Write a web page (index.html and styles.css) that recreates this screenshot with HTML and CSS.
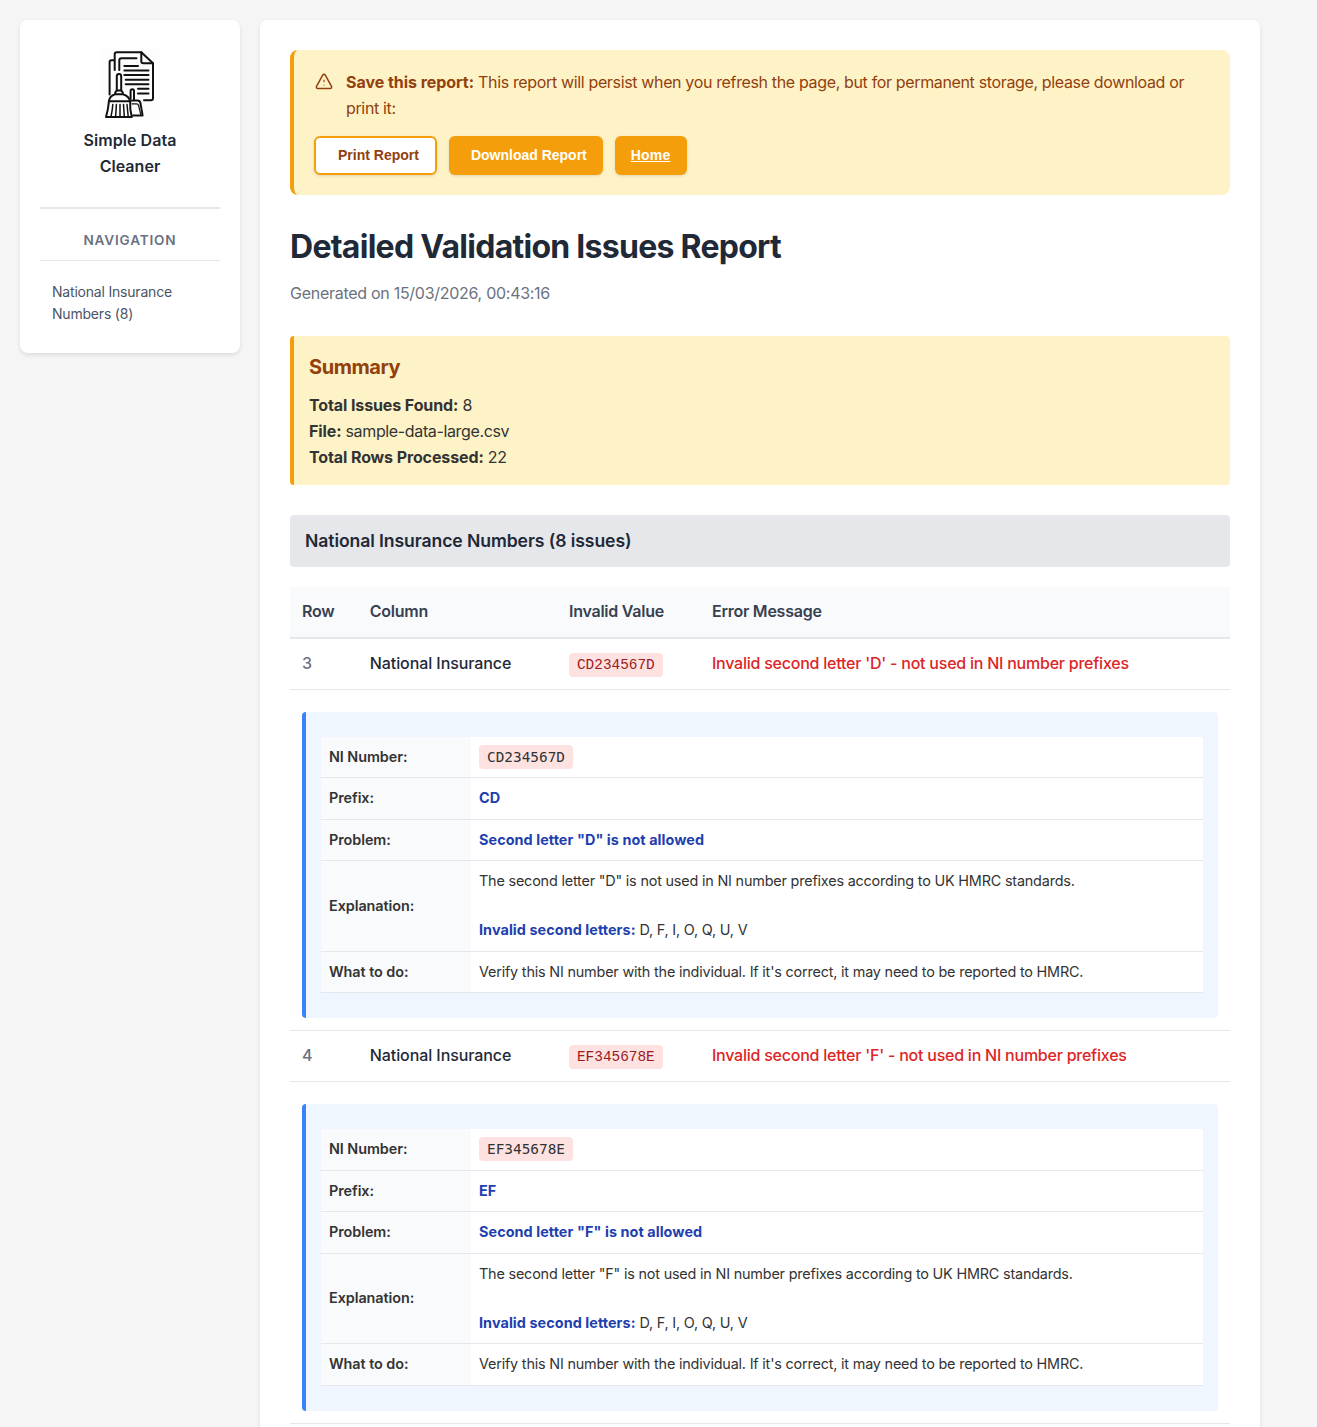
FILE: index.html
```html
<!DOCTYPE html>
<html lang="en">
<head>
<meta charset="utf-8">
<title>Detailed Validation Issues Report</title>
<link rel="stylesheet" href="styles.css">
</head>
<body>
<div class="layout">
  <aside class="sidebar">
    <div class="brand">
      <svg class="logo" viewBox="0 0 60 72" width="60" height="72" fill="none" stroke="#111" stroke-width="2" stroke-linecap="round" stroke-linejoin="round" aria-hidden="true">
        <path d="M14.7 22V6.5Q14.7 4.2 16.7 4.2H41.3L53 15.3V50.3Q53 52.3 51 52.3H44"/>
        <path d="M41.3 4.2V13.3Q41.3 15.3 43.3 15.3H53"/>
        <path d="M19.3 22V12.3Q19.3 10.2 21.4 10.2H36.5"/>
        <path d="M14 12.3H11.5Q9.6 12.3 9.6 14.2V46.5"/>
        <path d="M24.3 18.1H38M24.3 22.5H48.5M24.3 27.1H48.5M25.7 31.7H48.5M25.7 36.3H48.5M38 40.8H48.5M38 45.4H48.5"/>
        <path d="M16.8 42.5V28.2Q16.8 26 19 26T21.2 28.2V42.5"/>
        <path d="M16.8 42.5Q15 44 15 46.2Q9.5 48 8.9 53.2H30.2Q29 48 23 46.2Q23 44 21.2 42.5ZM15 46.2H23"/>
        <path d="M8.9 53.2Q8.4 61 6 69H31.8Q29.6 61 30.2 53.2"/>
        <path stroke-width="1.5" d="M12.8 56.5Q12.5 62 11 68.5M16.4 56.5L15.6 68.5M20 56.5V68.5M23.5 56.5L24.3 68.5M27 56.5L28.2 68.5"/>
        <path d="M30.6 50.5V43Q30.6 41.2 32.3 41.2T34 43V52.3"/>
        <path d="M30.7 52.5H37.5Q40 52.5 40.4 55L42.6 67.4H33"/>
        <path stroke-width="1.2" d="M32 55.8H36.5Q38.2 55.8 38.6 57.5L40.7 66.4"/>
      </svg>
      <div class="brand-name">Simple Data Cleaner</div>
    </div>
    <div class="nav-title">NAVIGATION</div>
    <a class="nav-link">National Insurance Numbers (8)</a>
  </aside>

  <main class="report">
    <section class="banner">
      <div class="banner-message">
        <svg class="warning-icon" viewBox="0 0 20 20" width="20" height="20" fill="none" stroke="currentColor" stroke-width="1.5" stroke-linecap="round" stroke-linejoin="round" aria-hidden="true">
          <path d="M8.7 3.1 2.5 14.3A1.5 1.5 0 0 0 3.8 16.5H16.2A1.5 1.5 0 0 0 17.5 14.3L11.3 3.1A1.5 1.5 0 0 0 8.7 3.1Z"/>
          <path stroke-width="1.2" d="M10 8.1V9.7M10 13H10.01"/>
        </svg>
        <p class="banner-text"><strong>Save this report:</strong> This report will persist when you refresh the page, but for permanent storage, please download or print it:</p>
      </div>
      <div class="actions">
        <button class="button button-outline">Print Report</button>
        <button class="button">Download Report</button>
        <a class="button button-link">Home</a>
      </div>
    </section>

    <h1 class="title">Detailed Validation Issues Report</h1>
    <p class="generated">Generated on 15/03/2026, 00:43:16</p>

    <section class="summary">
      <h2 class="summary-title">Summary</h2>
      <div><strong>Total Issues Found:</strong> 8</div>
      <div><strong>File:</strong> sample-data-large.csv</div>
      <div><strong>Total Rows Processed:</strong> 22</div>
    </section>

    <h3 class="group-title">National Insurance Numbers (8 issues)</h3>

    <div class="issues">
      <div class="issue-row issue-head">
        <div>Row</div><div>Column</div><div>Invalid Value</div><div>Error Message</div>
      </div>

      <div class="issue-row">
        <div class="row-number">3</div>
        <div class="column-name">National Insurance</div>
        <div class="value"><span class="pill">CD234567D</span></div>
        <div class="error">Invalid second letter 'D' - not used in NI number prefixes</div>
      </div>
      <div class="detail-row">
        <div class="detail">
          <dl class="facts">
            <dt>NI Number:</dt><dd><span class="pill pill-dark">CD234567D</span></dd>
            <dt>Prefix:</dt><dd><strong>CD</strong></dd>
            <dt>Problem:</dt><dd><strong>Second letter "D" is not allowed</strong></dd>
            <dt>Explanation:</dt><dd>The second letter "D" is not used in NI number prefixes according to UK HMRC standards.<br><br><strong>Invalid second letters:</strong> D, F, I, O, Q, U, V</dd>
            <dt>What to do:</dt><dd>Verify this NI number with the individual. If it's correct, it may need to be reported to HMRC.</dd>
          </dl>
        </div>
      </div>

      <div class="issue-row">
        <div class="row-number">4</div>
        <div class="column-name">National Insurance</div>
        <div class="value"><span class="pill">EF345678E</span></div>
        <div class="error">Invalid second letter 'F' - not used in NI number prefixes</div>
      </div>
      <div class="detail-row">
        <div class="detail">
          <dl class="facts">
            <dt>NI Number:</dt><dd><span class="pill pill-dark">EF345678E</span></dd>
            <dt>Prefix:</dt><dd><strong>EF</strong></dd>
            <dt>Problem:</dt><dd><strong>Second letter "F" is not allowed</strong></dd>
            <dt>Explanation:</dt><dd>The second letter "F" is not used in NI number prefixes according to UK HMRC standards.<br><br><strong>Invalid second letters:</strong> D, F, I, O, Q, U, V</dd>
            <dt>What to do:</dt><dd>Verify this NI number with the individual. If it's correct, it may need to be reported to HMRC.</dd>
          </dl>
        </div>
      </div>
    </div>
  </main>
</div>
</body>
</html>
```

FILE: styles.css
```css
* { box-sizing: border-box; }
html { background: #f5f5f5; }
body {
  margin: 0;
  height: 1427px;
  overflow: hidden;
  background: #f5f5f5;
  color: #333;
  font: 16px/1.6 Inter, "Liberation Sans", sans-serif;
}
h1, h2, h3, p, dl, dd { margin: 0; }

.layout {
  display: flex;
  align-items: flex-start;
  gap: 20px;
  padding: 20px;
}

.sidebar {
  width: 220px;
  flex: none;
  height: 333px;
  padding: 20px;
  background: #fff;
  border-radius: 8px;
  box-shadow: 0 2px 4px rgba(0, 0, 0, 0.1);
}
.brand {
  height: 169px;
  padding: 8px 30px 0;
  border-bottom: 2px solid #e5e7eb;
  text-align: center;
}
.logo { display: block; margin: 0 auto 8px; background: #fdfdfd; }
.brand-name { font-weight: 600; color: #1f2937; letter-spacing: 0.04px; }
.nav-title {
  height: 52px;
  padding-top: 21px;
  border-bottom: 1px solid #e5e7eb;
  color: #6b7280;
  font-size: 13.6px;
  font-weight: 600;
  letter-spacing: 0.82px;
  text-align: center;
}
.nav-link {
  display: block;
  padding: 20px 12px 0;
  color: #4b5563;
  font-size: 14px;
  line-height: 22.4px;
  letter-spacing: -0.2px;
}

.report {
  width: 1000px;
  flex: none;
  padding: 30px;
  background: #fff;
  border-radius: 8px 8px 0 0;
  box-shadow: 0 2px 4px rgba(0, 0, 0, 0.1);
}

.banner {
  height: 145px;
  padding: 20px;
  background: #fef3c7;
  border-left: 4px solid #f59e0b;
  border-radius: 8px;
  color: #92400e;
}
.banner-message { display: flex; gap: 12px; height: 66px; }
.warning-icon { flex: none; margin-top: 2px; }
.banner-text { letter-spacing: -0.352px; }
.banner-text strong { letter-spacing: -0.04px; }
.actions { display: flex; gap: 12px; }
.button {
  height: 39px;
  padding: 0 16px 1px 22px;
  border: 0;
  border-radius: 6px;
  background: #f59e0b;
  box-shadow: 0 1px 3px rgba(0, 0, 0, 0.12);
  color: #fff;
  font: bold 14px/38px "Liberation Sans", Arial, sans-serif;
}
.button-outline {
  border: 2px solid #f59e0b;
  background: #fff;
  color: #92400e;
  line-height: 34px;
}
.button-link {
  width: 72px;
  padding: 0 16px;
  letter-spacing: 0.2px;
  text-decoration: underline;
}

.title {
  margin-top: 26px;
  color: #1f2937;
  font-size: 32px;
  font-weight: 700;
  line-height: 51.2px;
  letter-spacing: -0.732px;
}
.generated { margin-top: 9px; color: #6b7280; letter-spacing: -0.279px; }

.summary {
  height: 149px;
  margin-top: 29px;
  padding: 15px;
  background: #fef3c7;
  border-left: 4px solid #f59e0b;
  border-radius: 4px;
  line-height: 26px;
  letter-spacing: -0.36px;
}
.summary strong { letter-spacing: -0.11px; }
.summary-title {
  margin-bottom: 9px;
  color: #92400e;
  font-size: 20px;
  font-weight: 700;
  line-height: 32px;
  letter-spacing: -0.453px;
}

.group-title {
  height: 52px;
  margin: 30px 0 20px;
  padding-left: 15px;
  background: #e5e7eb;
  border-radius: 4px;
  color: #1f2937;
  font-size: 17.6px;
  font-weight: 600;
  line-height: 52px;
  letter-spacing: -0.09px;
}

.issue-row {
  display: grid;
  grid-template-columns: 67.8px 199.2px 143px 1fr;
  height: 50.9px;
  padding-left: 12px;
  border-bottom: 1px solid #e5e7eb;
  line-height: 49.3px;
}
.issue-head {
  height: 52px;
  border-bottom-width: 2px;
  background: #f9fafb;
  color: #374151;
  font-weight: 600;
  line-height: 49px;
  letter-spacing: -0.24px;
}
.row-number { color: #6b7280; font-weight: 500; }
.column-name { color: #1f2937; font-weight: 500; letter-spacing: -0.085px; }
.value { padding-top: 14px; line-height: 24px; }
.error { color: #dc2626; font-weight: 500; letter-spacing: -0.235px; }
.pill {
  display: inline-block;
  height: 24px;
  padding: 0 8px;
  border-radius: 4px;
  background: #fee2e2;
  color: #991b1b;
  font: 14.4px/24px "Courier New", "Liberation Mono", monospace;
  letter-spacing: 0;
  vertical-align: top;
}
.pill-dark {
  color: #333;
  font-family: "DejaVu Sans Mono", monospace;
}

.detail-row {
  height: 341.65px;
  padding: 22px 12px 12px;
  border-bottom: 1px solid #e5e7eb;
}
.detail {
  height: 306.4px;
  padding: 25px 15px;
  background: #eff6ff;
  border-left: 4px solid #3b82f6;
  border-radius: 4px;
}
.facts {
  display: grid;
  grid-template-columns: 150px 1fr;
  grid-template-rows: 41.48px 41.48px 41.48px 90.44px 41.48px;
  background: #fff;
  font-size: 14.4px;
  line-height: 24.48px;
}
.facts dt, .facts dd { padding: 8px; border-bottom: 1px solid #e5e7eb; }
.facts dt {
  display: flex;
  align-items: center;
  background: #f9fafb;
  font-weight: 600;
  letter-spacing: -0.06px;
}
.facts dd { letter-spacing: -0.187px; }
.facts strong { color: #1e40af; letter-spacing: 0.07px; }
```
